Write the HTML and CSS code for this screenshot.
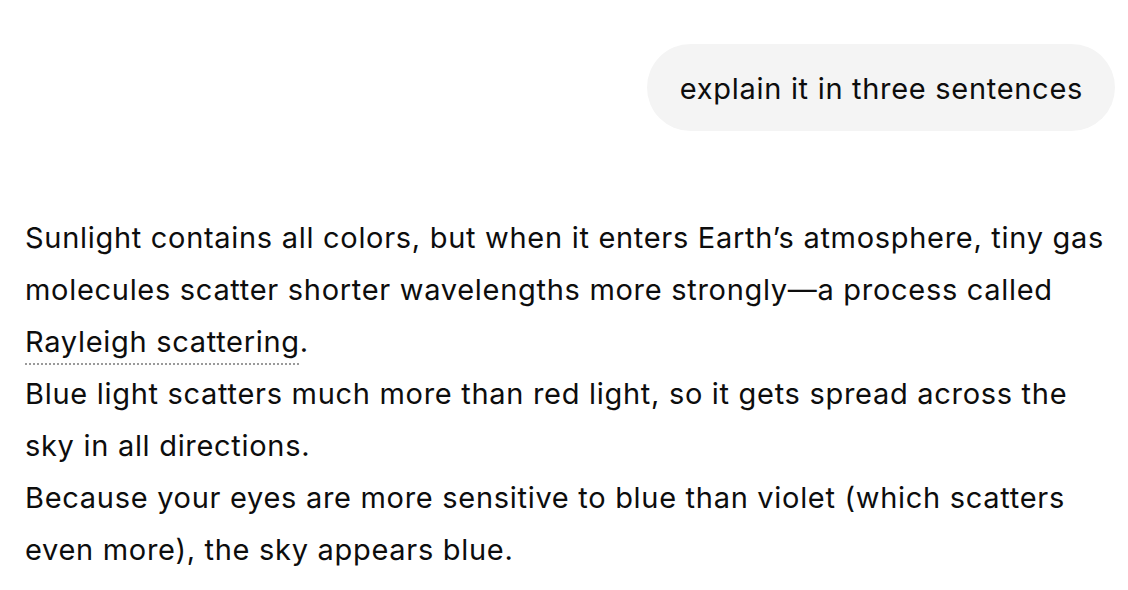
FILE: index.html
```html
<!DOCTYPE html>
<html>
<head>
<meta charset="utf-8">
<link rel="stylesheet" href="styles.css">
</head>
<body>
<main class="thread">
  <div class="user-row">
    <div class="bubble">explain it in three sentences</div>
  </div>
  <div class="answer">
    <p>Sunlight contains all colors, but when it enters Earth’s atmosphere, tiny gas molecules scatter shorter wavelengths more strongly—a process called <span class="term">Rayleigh scattering</span>.<br>Blue light scatters much more than red light, so it gets spread across the sky in all directions.<br>Because your eyes are more sensitive to blue than violet (which scatters even more), the sky appears blue.</p>
  </div>
</main>
</body>
</html>
```
FILE: styles.css
```css
html, body {
  margin: 0;
  padding: 0;
  background: #ffffff;
}
body {
  font-family: Inter, "Noto Sans", sans-serif;
  color: #0d0d0d;
  font-size: 29px;
  letter-spacing: 0.7px;
}
.thread {
  padding: 44px 13px 0 25px;
  display: flex;
  flex-direction: column;
}
.user-row {
  display: flex;
  justify-content: flex-end;
}
.bubble {
  background: #f4f4f4;
  border-radius: 44px;
  padding: 2px 32px 0 33px;
  height: 87px;
  box-sizing: border-box;
  display: flex;
  align-items: center;
  line-height: 52px;
}
.answer {
  margin-top: 81px;
}
.answer p {
  margin: 0;
  line-height: 52px;
}
.term {
  text-decoration: underline dotted #9a9a9a;
  text-underline-offset: 11px;
  text-decoration-thickness: 2px;
}
```
